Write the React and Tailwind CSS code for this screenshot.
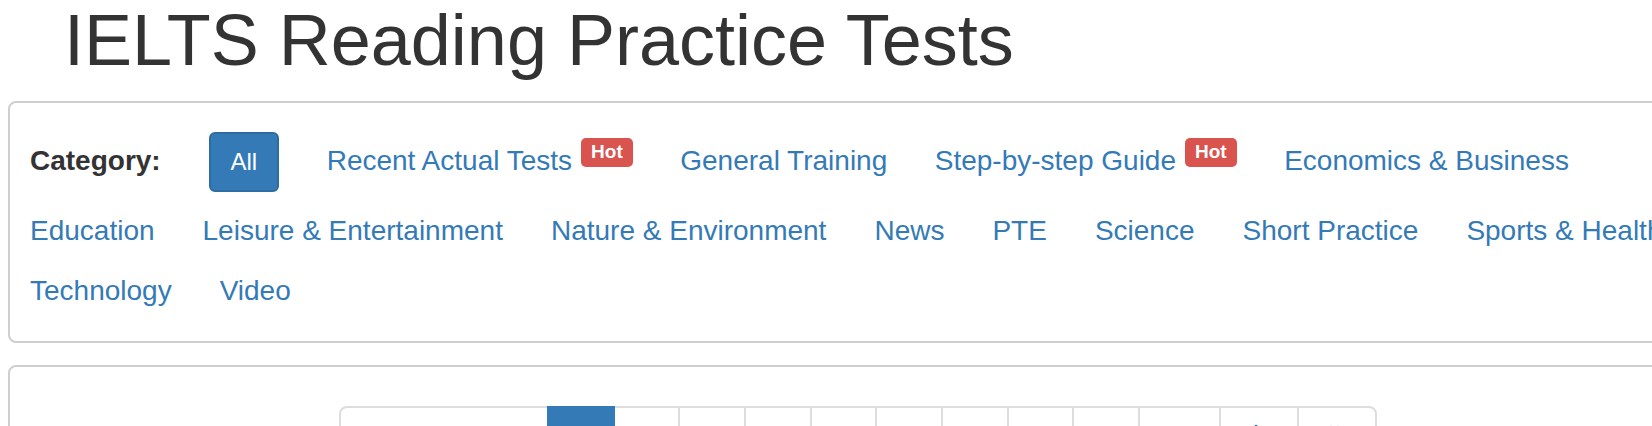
import React from "react";
import {ChevronRight, ChevronsRight} from "lucide-react";

const HotBadge = () => (
    <span className="ml-[9px] mt-[-4px] rounded-[5px] bg-[#d9534f] px-[10px] pt-[4px] pb-[6px] text-[19px] font-bold leading-none text-white">
        Hot
    </span>
);

const CatLink = ({label, hot}) => (
    <span className="flex items-start">
        <a href="#" className="text-[28px] leading-[38px] text-[#337ab7] whitespace-nowrap">{label}</a>
        {hot && <HotBadge/>}
    </span>
);

const rowTwo = ["Education", "Leisure & Entertainment", "Nature & Environment", "News", "PTE", "Science", "Short Practice", "Sports & Health"];
const rowThree = ["Technology", "Video"];

const PageCell = ({children, active, className = ""}) => (
    <span
        className={
            "-ml-[2px] flex h-[60px] justify-center border-2 pt-[12px] text-[28px] leading-[40px] first:ml-0 " +
            (active ? "relative z-10 border-[#337ab7] bg-[#337ab7] text-white " : "border-[#dddddd] bg-white text-[#337ab7] ") +
            className
        }>
        {children}
    </span>
);

const App = () => {
    const pages = [2, 3, 4, 5, 6, 7, 8, 9];
    return (
        <div className="h-[426px] w-full overflow-hidden bg-white font-['Liberation_Sans',Arial,sans-serif]">
            <div className="w-[1716px]">
                <h1 className="pl-[64px] pt-[1px] text-[72px] font-normal leading-[79px] text-[#333333]">
                    IELTS Reading Practice Tests
                </h1>

                <div className="ml-[8px] mt-[21px] w-[1700px] rounded-[8px] border-2 border-[#cfcfcf] px-[20px] pt-[29px] pb-[31px]">
                    <div className="flex flex-col">
                        <div className="flex items-baseline gap-x-[47.5px]">
                            <span className="w-[131px] text-[28px] font-bold leading-[38px] text-[#333333]">Category:</span>
                            <button type="button"
                                    className="rounded-[6px] border-2 border-[#2e6da4] bg-[#337ab7] px-[20px] py-[10px] text-[24px] leading-[36px] text-white">
                                All
                            </button>
                            <CatLink label="Recent Actual Tests" hot/>
                            <CatLink label="General Training"/>
                            <CatLink label="Step-by-step Guide" hot/>
                            <CatLink label="Economics & Business"/>
                        </div>
                        <div className="mt-[20px] flex items-baseline gap-x-[48px]">
                            {rowTwo.map((c) => <CatLink key={c} label={c}/>)}
                        </div>
                        <div className="mt-[22px] flex items-baseline gap-x-[48px]">
                            {rowThree.map((c) => <CatLink key={c} label={c}/>)}
                        </div>
                    </div>
                </div>

                <div className="ml-[8px] mt-[22px] h-[200px] w-[1700px] rounded-[8px] border-2 border-[#cfcfcf] pt-[39px]">
                    <div className="flex justify-center">
                        <div className="flex">
                            <PageCell className="w-[210px] rounded-l-[8px]">« Prev</PageCell>
                            <PageCell active className="w-[67.7px]">1</PageCell>
                            {pages.map((p) => (
                                <PageCell key={p} className="w-[67.7px]">{p}</PageCell>
                            ))}
                            <PageCell className="w-[83px]">10</PageCell>
                            <PageCell className="w-[80px] !pt-[12px]">
                                <ChevronRight size={24} strokeWidth={2.5}/>
                            </PageCell>
                            <PageCell className="w-[80px] rounded-r-[8px] !pt-[12px]">
                                <ChevronsRight size={24} strokeWidth={2.5}/>
                            </PageCell>
                        </div>
                    </div>
                </div>
            </div>
        </div>
    );
};

export default App
